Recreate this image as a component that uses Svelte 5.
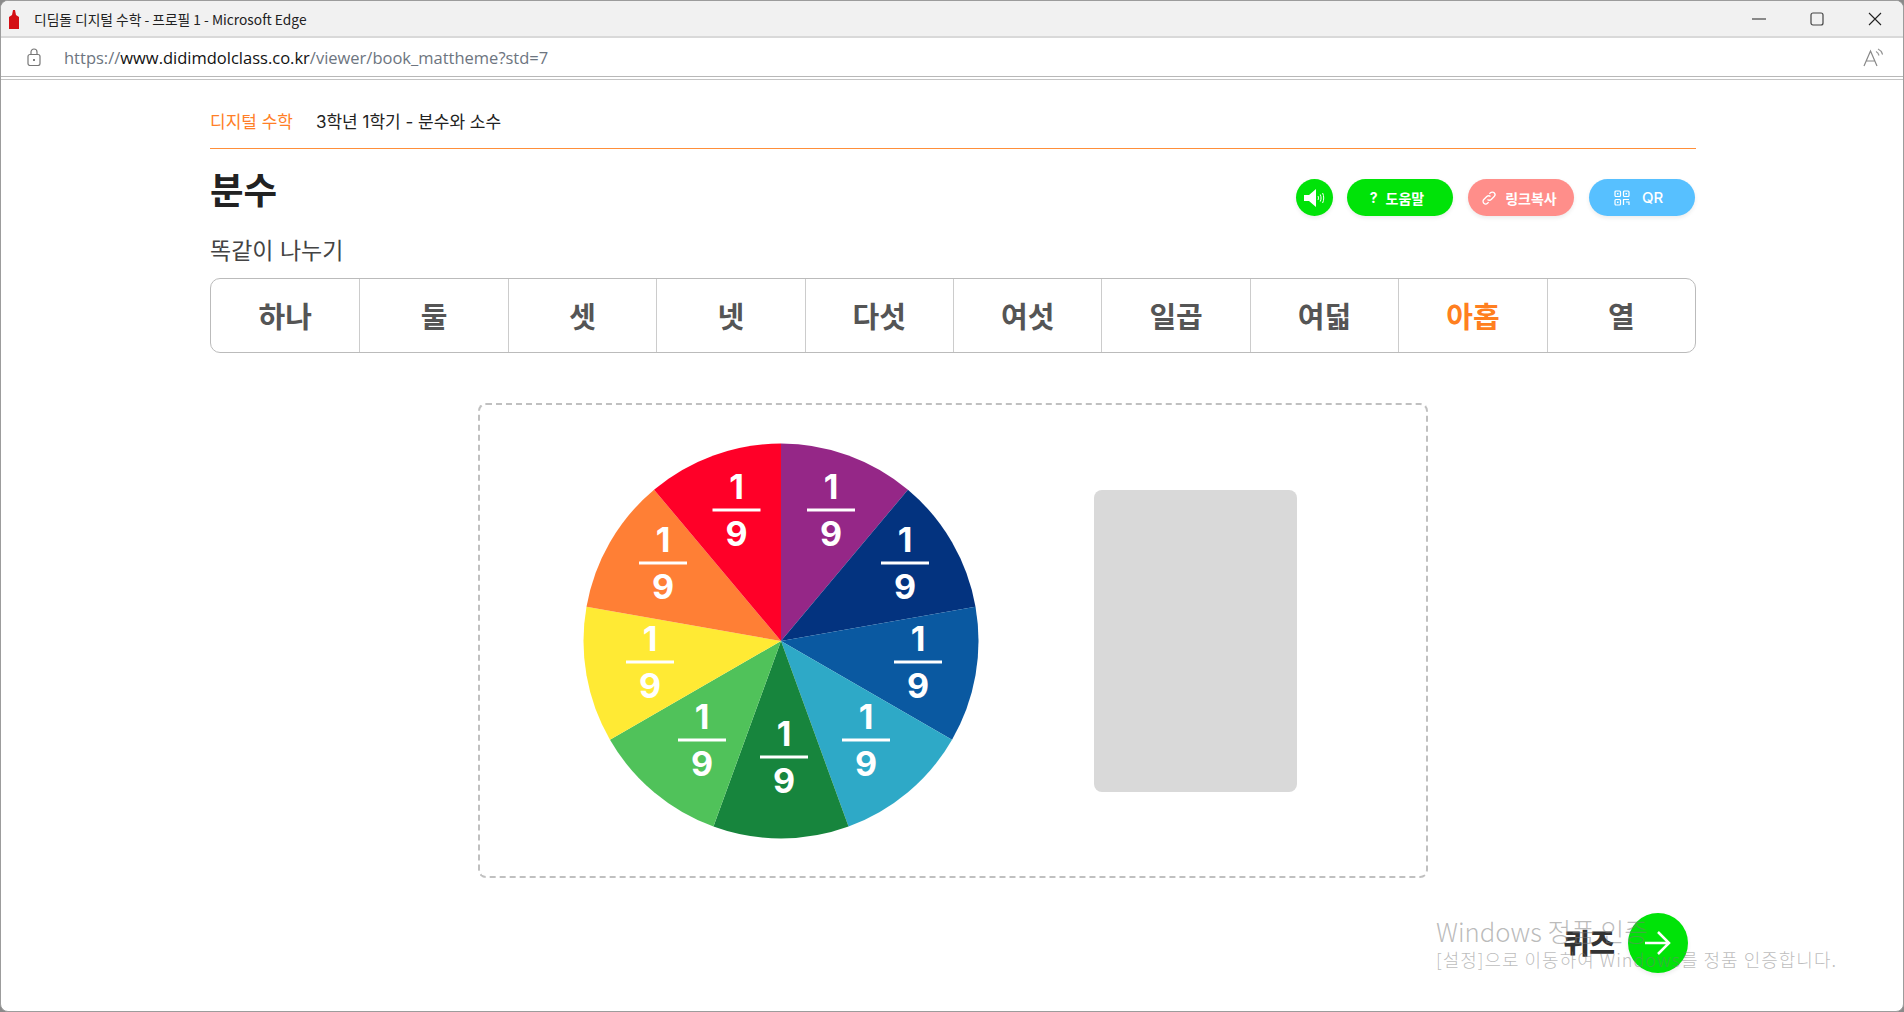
<script>
  const tabs = ["하나", "둘", "셋", "넷", "다섯", "여섯", "일곱", "여덟", "아홉", "열"];
  const current = 8;

  const cx = 210;
  const cy = 210;
  const r = 197.5;

  // clockwise from 12 o'clock, label x/y are the fraction bar centre
  const slices = [
    { color: "#952787", x: 260, y: 79 },
    { color: "#03337f", x: 334, y: 132 },
    { color: "#0a59a1", x: 347, y: 231 },
    { color: "#2ea9c7", x: 295, y: 309 },
    { color: "#17853d", x: 213, y: 326 },
    { color: "#50c25a", x: 131, y: 309 },
    { color: "#ffea34", x: 79, y: 231 },
    { color: "#ff7f35", x: 92, y: 132 },
    { color: "#ff0028", x: 165.5, y: 79 }
  ];

  function point(deg) {
    const a = (deg * Math.PI) / 180;
    return (cx + r * Math.sin(a)).toFixed(2) + " " + (cy - r * Math.cos(a)).toFixed(2);
  }

  function wedge(i) {
    return `M${cx} ${cy} L${point(i * 40)} A${r} ${r} 0 0 1 ${point((i + 1) * 40)} Z`;
  }
</script>

<div class="window">
  <header class="titlebar">
    <svg class="favicon" width="10" height="20" viewBox="0 0 10 20">
      <path d="M0 20V8l3-2 1-5 2 0 1 5 3 2v12z" fill="#d40f14" />
    </svg>
    <span class="title">디딤돌 디지털 수학 - 프로필 1 - Microsoft Edge</span>
    <div class="controls">
      <svg width="14" height="14" viewBox="0 0 14 14"><path d="M0 7h14" stroke="#222" stroke-width="1.2" /></svg>
      <svg width="14" height="14" viewBox="0 0 14 14"><rect x="1" y="1" width="12" height="12" rx="2" fill="none" stroke="#444" stroke-width="1.2" /></svg>
      <svg width="14" height="14" viewBox="0 0 14 14"><path d="M1 1l12 12M13 1L1 13" stroke="#222" stroke-width="1.1" /></svg>
    </div>
  </header>

  <div class="addressbar">
    <svg class="lock" width="14" height="18" viewBox="0 0 14 18">
      <rect x="1" y="6.5" width="12" height="11" rx="2" fill="none" stroke="#777" stroke-width="1.2" />
      <path d="M4 6.5V4a3 3 0 0 1 6 0v2.500" fill="none" stroke="#777" stroke-width="1.2" />
      <circle cx="7" cy="12" r="1" fill="#555" />
    </svg>
    <span class="url">https://<b>www.didimdolclass.co.kr</b>/viewer/book_mattheme?std=7</span>
    <svg class="readaloud" width="20" height="19" viewBox="0 0 20 19">
      <path d="M1 18L7.500 3 14 18M3.500 13h8" fill="none" stroke="#888" stroke-width="1.2" />
      <path d="M13 3.500c1.600.8 2.600 2.200 3 4M15 1c2.300 1 4 3.200 4.600 5.500" fill="none" stroke="#999" stroke-width="1.2" />
    </svg>
  </div>
  <div class="rule"></div>

  <main class="page">
    <div class="crumbs">
      <span class="brand">디지털 수학</span>
      <span>3학년 1학기 - 분수와 소수</span>
    </div>

    <div class="heading">
      <h1>분수</h1>
      <div class="actions">
        <button class="sound" aria-label="소리">
          <svg width="22" height="18" viewBox="0 0 22 18">
            <path d="M0 6h5l7-6v18l-7-6H0z" fill="#fff" />
            <path d="M14 7c.6 1.200.6 2.800 0 4M16.300 5.500c1 2.200 1 4.800 0 7M18.600 4c1.500 3.200 1.500 6.800 0 10" fill="none" stroke="#fff" stroke-width="1" />
          </svg>
        </button>
        <button class="pill green help"><span>?</span><span>도움말</span></button>
        <button class="pill pink link">
          <svg width="16" height="16" viewBox="0 0 16 16" fill="none" stroke="#fff" stroke-width="1.300">
            <path d="M6.500 9.500a2.600 2.600 0 0 0 3.700 0l3-3a2.600 2.600 0 0 0-3.700-3.700L8.400 3.900" />
            <path d="M9.500 6.500a2.600 2.600 0 0 0-3.700 0l-3 3a2.600 2.600 0 0 0 3.700 3.700l1.100-1.100" />
          </svg>
          <span>링크복사</span>
        </button>
        <button class="pill blue">
          <svg width="16" height="16" viewBox="0 0 16 16" fill="none" stroke="#fff" stroke-width="1.200">
            <rect x="1" y="1" width="5.500" height="5.500" rx="1" />
            <rect x="9.500" y="1" width="5.500" height="5.500" rx="1" />
            <rect x="1" y="9.500" width="5.500" height="5.500" rx="1" />
            <path d="M9.500 15V9.500h5.500M12 12h3v3" />
            <path d="M3 3h1.500v1.500H3zM11.500 3H13v1.500h-1.500zM3 11.500h1.500V13H3z" fill="#fff" stroke="none" />
          </svg>
          <span class="qr">QR</span>
        </button>
      </div>
    </div>

    <h2>똑같이 나누기</h2>

    <nav class="tabs">
      {#each tabs as tab, i}
        <div class="tab" class:current={i === current}>{tab}</div>
      {/each}
    </nav>

    <section class="stage">
      <svg class="pie" width="420" height="420" viewBox="0 0 420 420">
        {#each slices as s, i}
          <path d={wedge(i)} fill={s.color} />
        {/each}
        {#each slices as s}
          <text x={s.x} y={s.y - 11.500} class="num">1</text>
          <rect x={s.x - 24} y={s.y - 1.500} width="48" height="3" fill="#fff" />
          <text x={s.x} y={s.y + 35.500} class="num">9</text>
        {/each}
      </svg>
      <div class="blank"></div>
    </section>

    <div class="next">
      <span class="next-label">퀴즈</span>
      <button class="go" aria-label="퀴즈">
        <svg width="26" height="24" viewBox="0 0 26 24" fill="none" stroke="#fff" stroke-width="2.500">
          <path d="M0 12h24M13 1l11 11-11 11" />
        </svg>
      </button>
    </div>
  </main>

  <div class="watermark">
    <div class="wm-big">Windows 정품 인증</div>
    <div class="wm-small">[설정]으로 이동하여 Windows를 정품 인증합니다.</div>
  </div>
</div>

<style>
  :global(body) {
    margin: 0;
    background: #8a8a8a;
  }
  .window {
    position: relative;
    width: 1904px;
    height: 1012px;
    box-sizing: border-box;
    border: 1px solid #9c9c9c;
    border-radius: 8px;
    background: #fff;
    overflow: hidden;
    font-family: Inter, "Noto Sans CJK KR", sans-serif;
    color: #222;
  }
  .titlebar {
    display: flex;
    align-items: center;
    height: 37px;
    box-sizing: border-box;
    padding-left: 8px;
    background: #f1f1f1;
    border-bottom: 2px solid #d9d9d9;
  }
  .favicon {
    margin-right: 15px;
  }
  .title {
    font-family: "Noto Sans CJK KR", sans-serif;
    font-size: 13.750px;
    color: #222;
  }
  .controls {
    display: flex;
    align-items: center;
    gap: 44px;
    margin-left: auto;
    padding-right: 21px;
  }
  .addressbar {
    display: flex;
    align-items: center;
    height: 39px;
    box-sizing: border-box;
    padding: 0 20px 0 26px;
    border-bottom: 1px solid #b8b8b8;
  }
  .lock {
    margin-right: 23px;
  }
  .url {
    font-family: "Open Sans", sans-serif;
    font-size: 16.500px;
    color: #6d7580;
  }
  .url b {
    font-weight: 400;
    color: #111;
  }
  .readaloud {
    margin-left: auto;
  }
  .rule {
    margin-top: 2px;
    border-top: 1px solid #c4c4c4;
  }
  .page {
    width: 1486px;
    margin-left: 209px;
  }
  .crumbs {
    display: flex;
    gap: 23px;
    align-items: flex-start;
    height: 69px;
    box-sizing: border-box;
    padding-top: 30px;
    border-bottom: 1px solid #ff8f3a;
    font-size: 17px;
    line-height: 24px;
    font-weight: 400;
  }
  .brand {
    color: #ff7f27;
  }
  .heading {
    display: flex;
    justify-content: space-between;
    align-items: flex-start;
    height: 86px;
  }
  h1 {
    margin: 17px 0 0;
    font-size: 36.500px;
    line-height: 50px;
    font-weight: 700;
    color: #222;
  }
  .actions {
    display: flex;
    gap: 15px;
    margin: 30px 1px 0 0;
  }
  button {
    display: flex;
    align-items: center;
    justify-content: center;
    border: 0;
    padding: 0;
    color: #fff;
    font-family: inherit;
    box-shadow: 0 2px 4px rgba(0, 0, 0, 0.08);
  }
  .sound {
    width: 37px;
    height: 37px;
    border-radius: 50%;
    background: #00e308;
    margin-right: -1px;
  }
  .pill {
    width: 106px;
    height: 37px;
    gap: 8px;
    border-radius: 19px;
    font-size: 14px;
    font-weight: 700;
  }
  .help {
    padding-right: 6px;
  }
  .link {
    padding-right: 4px;
  }
  .green {
    background: #00e308;
  }
  .pink {
    background: #ff8e8a;
  }
  .blue {
    background: #57c0ff;
    padding-right: 7px;
  }
  .blue .qr {
    margin-left: 4px;
    font-size: 15px;
    font-weight: 500;
  }
  h2 {
    margin: 0;
    height: 43px;
    font-size: 23px;
    line-height: 32px;
    font-weight: 400;
    color: #444;
  }
  .tabs {
    display: grid;
    grid-template-columns: repeat(10, 1fr);
    height: 75px;
    box-sizing: border-box;
    border: 1px solid #bbb;
    border-radius: 10px;
  }
  .tab {
    display: flex;
    align-items: center;
    justify-content: center;
    padding-bottom: 2px;
    border-left: 1px solid #ccc;
    font-size: 29px;
    font-weight: 700;
    color: #555;
  }
  .tab:first-child {
    border-left: 0;
  }
  .tab.current {
    color: #ff7f20;
  }
  .stage {
    display: flex;
    align-items: center;
    width: 950px;
    height: 475px;
    box-sizing: border-box;
    margin: 50px 0 0 268px;
    padding-left: 91px;
    border: 2px dashed #c0c0c0;
    border-radius: 8px;
  }
  .pie {
    flex: none;
  }
  .num {
    fill: #fff;
    font-size: 34px;
    font-weight: 700;
    text-anchor: middle;
  }
  .blank {
    width: 203px;
    height: 302px;
    margin-left: 103px;
    background: #d9d9d9;
    border-radius: 8px;
  }
  .next {
    display: flex;
    align-items: center;
    justify-content: flex-end;
    gap: 13px;
    margin: 35px 8px 0 0;
    font-size: 28px;
    font-weight: 900;
    color: #333;
  }
  .next-label {
    padding-bottom: 2px;
  }
  .go {
    width: 60px;
    height: 60px;
    border-radius: 50%;
    background: #00e308;
  }
  .watermark {
    position: absolute;
    left: 1435px;
    top: 915px;
    color: rgba(120, 120, 120, 0.5);
    pointer-events: none;
    font-family: "Noto Sans CJK KR", sans-serif;
  }
  .wm-big {
    font-size: 25.700px;
    line-height: 30px;
    font-weight: 300;
  }
  .wm-small {
    font-size: 18px;
    line-height: 24px;
    letter-spacing: 1px;
    margin-top: 1px;
    font-weight: 300;
  }
</style>
